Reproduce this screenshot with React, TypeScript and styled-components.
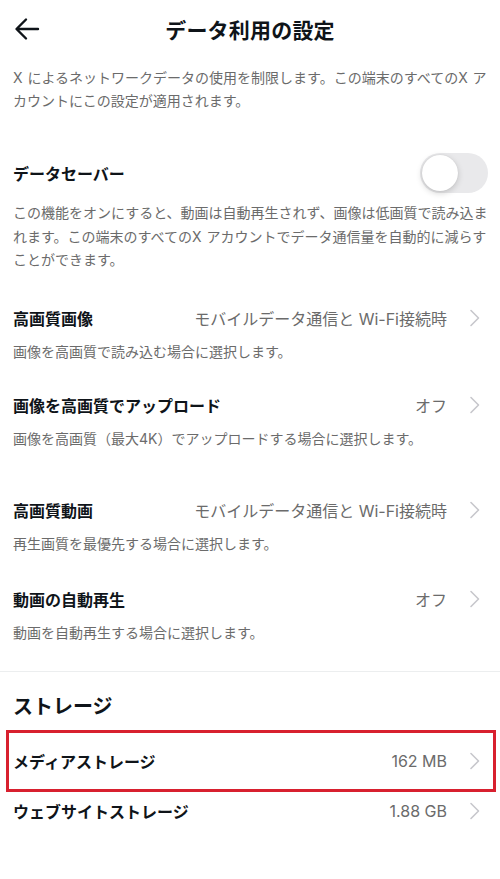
import React from 'react';
import styled, { createGlobalStyle } from 'styled-components';

const GlobalStyle = createGlobalStyle`
  body {
    margin: 0;
    background: #ffffff;
    font-family: Inter, "Noto Sans CJK JP", sans-serif;
    -webkit-font-smoothing: antialiased;
  }
`;

const Page = styled.div`
  width: 500px;
  min-height: 879px;
  background: #fff;
  color: #0f1419;
`;

const Header = styled.header`
  display: grid;
  grid-template-columns: 56px 1fr 56px;
  align-items: center;
  height: 58px;
`;

const BackButton = styled.div`
  display: flex;
  align-items: center;
  padding-left: 14px;
  height: 100%;
`;

const Title = styled.h1`
  margin: 0;
  text-align: center;
  font-size: 21px;
  font-weight: 700;
  letter-spacing: 0.2px;
`;

const Section = styled.div`
  padding: 0 12px 0 13px;
`;

const Intro = styled.p`
  margin: 8px -4px 0 0;
  font-size: 14px;
  line-height: 23px;
  color: #6b6b6b;
  word-spacing: 1px;
`;

const SaverRow = styled.div`
  display: flex;
  align-items: center;
  justify-content: space-between;
  height: 41px;
  margin-top: 40px;
`;

const RowTitle = styled.span`
  flex: 1;
  font-size: 16px;
  font-weight: 700;
`;

const Toggle = styled.div`
  display: flex;
  align-items: center;
  width: 68px;
  height: 40px;
  padding: 2px;
  box-sizing: border-box;
  border-radius: 20px;
  background: #e9e9eb;
`;

const Knob = styled.div`
  width: 36px;
  height: 36px;
  border-radius: 50%;
  background: #fff;
  box-shadow: 0 2px 6px rgba(0, 0, 0, 0.18), 0 0 1px rgba(0, 0, 0, 0.12);
`;

const Description = styled.p<{ $gap?: number }>`
  margin: ${(p) => p.$gap ?? 9}px -4px 0 0;
  font-size: 14px;
  line-height: 23.5px;
  color: #6b6b6b;
  word-spacing: 1px;
`;

const Item = styled.div<{ $gap: number }>`
  margin-top: ${(p) => p.$gap}px;
`;

const Row = styled.div<{ $height?: number }>`
  position: relative;
  display: flex;
  align-items: center;
  height: ${(p) => p.$height ?? 24}px;
`;

const Value = styled.span`
  font-size: 16px;
  color: #6b6b6b;
`;

const Chevron = styled.svg`
  margin: 0 7px 0 22px;
  flex-shrink: 0;
`;

const Divider = styled.hr`
  margin: 26px 0 0;
  border: 0;
  height: 1px;
  background: #eceeef;
`;

const StorageHeading = styled.h2`
  margin: 21px 0 0;
  font-size: 20px;
  line-height: 28px;
  font-weight: 700;
`;

const StorageList = styled.div`
  margin-top: 15px;
`;

const Highlight = styled.div`
  position: absolute;
  top: -6px;
  bottom: -6px;
  left: -7px;
  right: -8px;
  border: 3px solid #d8202f;
  pointer-events: none;
`;

const ChevronIcon = () => (
  <Chevron width="12" height="18" viewBox="0 0 12 18">
    <path d="M2 1.5 L9.5 9 L2 16.5" fill="none" stroke="#c7c7cc" strokeWidth="1.6" strokeLinecap="round" strokeLinejoin="round" />
  </Chevron>
);

const qualityItems = [
  { title: '高画質画像', value: 'モバイルデータ通信と Wi-Fi接続時', desc: '画像を高画質で読み込む場合に選択します。', gap: 34 },
  { title: '画像を高画質でアップロード', value: 'オフ', desc: '画像を高画質（最大4K）でアップロードする場合に選択します。', gap: 30 },
  { title: '高画質動画', value: 'モバイルデータ通信と Wi-Fi接続時', desc: '再生画質を最優先する場合に選択します。', gap: 47 },
  { title: '動画の自動再生', value: 'オフ', desc: '動画を自動再生する場合に選択します。', gap: 32 },
];

const storageItems = [
  { title: 'メディアストレージ', value: '162 MB', highlighted: true },
  { title: 'ウェブサイトストレージ', value: '1.88 GB', highlighted: false },
];

export default function App() {
  return (
    <Page>
      <GlobalStyle />
      <Header>
        <BackButton>
          <svg width="26" height="24" viewBox="0 0 26 24">
            <path d="M24 12 H3 M12 2.5 L2.5 12 L12 21.5" fill="none" stroke="#0f1419" strokeWidth="2.4" strokeLinecap="round" strokeLinejoin="round" />
          </svg>
        </BackButton>
        <Title>データ利用の設定</Title>
        <div />
      </Header>

      <Section>
        <Intro>X によるネットワークデータの使用を制限します。この端末のすべてのX アカウントにこの設定が適用されます。</Intro>

        <SaverRow>
          <RowTitle>データセーバー</RowTitle>
          <Toggle>
            <Knob />
          </Toggle>
        </SaverRow>
        <Description $gap={8}>
          この機能をオンにすると、動画は自動再生されず、画像は低画質で読み込まれます。この端末のすべてのX アカウントでデータ通信量を自動的に減らすことができます。
        </Description>

        {qualityItems.map((item) => (
          <Item key={item.title} $gap={item.gap}>
            <Row>
              <RowTitle>{item.title}</RowTitle>
              <Value>{item.value}</Value>
              <ChevronIcon />
            </Row>
            <Description $gap={10}>{item.desc}</Description>
          </Item>
        ))}
      </Section>

      <Divider />

      <Section>
        <StorageHeading>ストレージ</StorageHeading>
        <StorageList>
          {storageItems.map((item) => (
            <Row key={item.title} $height={50}>
              <RowTitle>{item.title}</RowTitle>
              <Value>{item.value}</Value>
              <ChevronIcon />
              {item.highlighted && <Highlight />}
            </Row>
          ))}
        </StorageList>
      </Section>
    </Page>
  );
}
